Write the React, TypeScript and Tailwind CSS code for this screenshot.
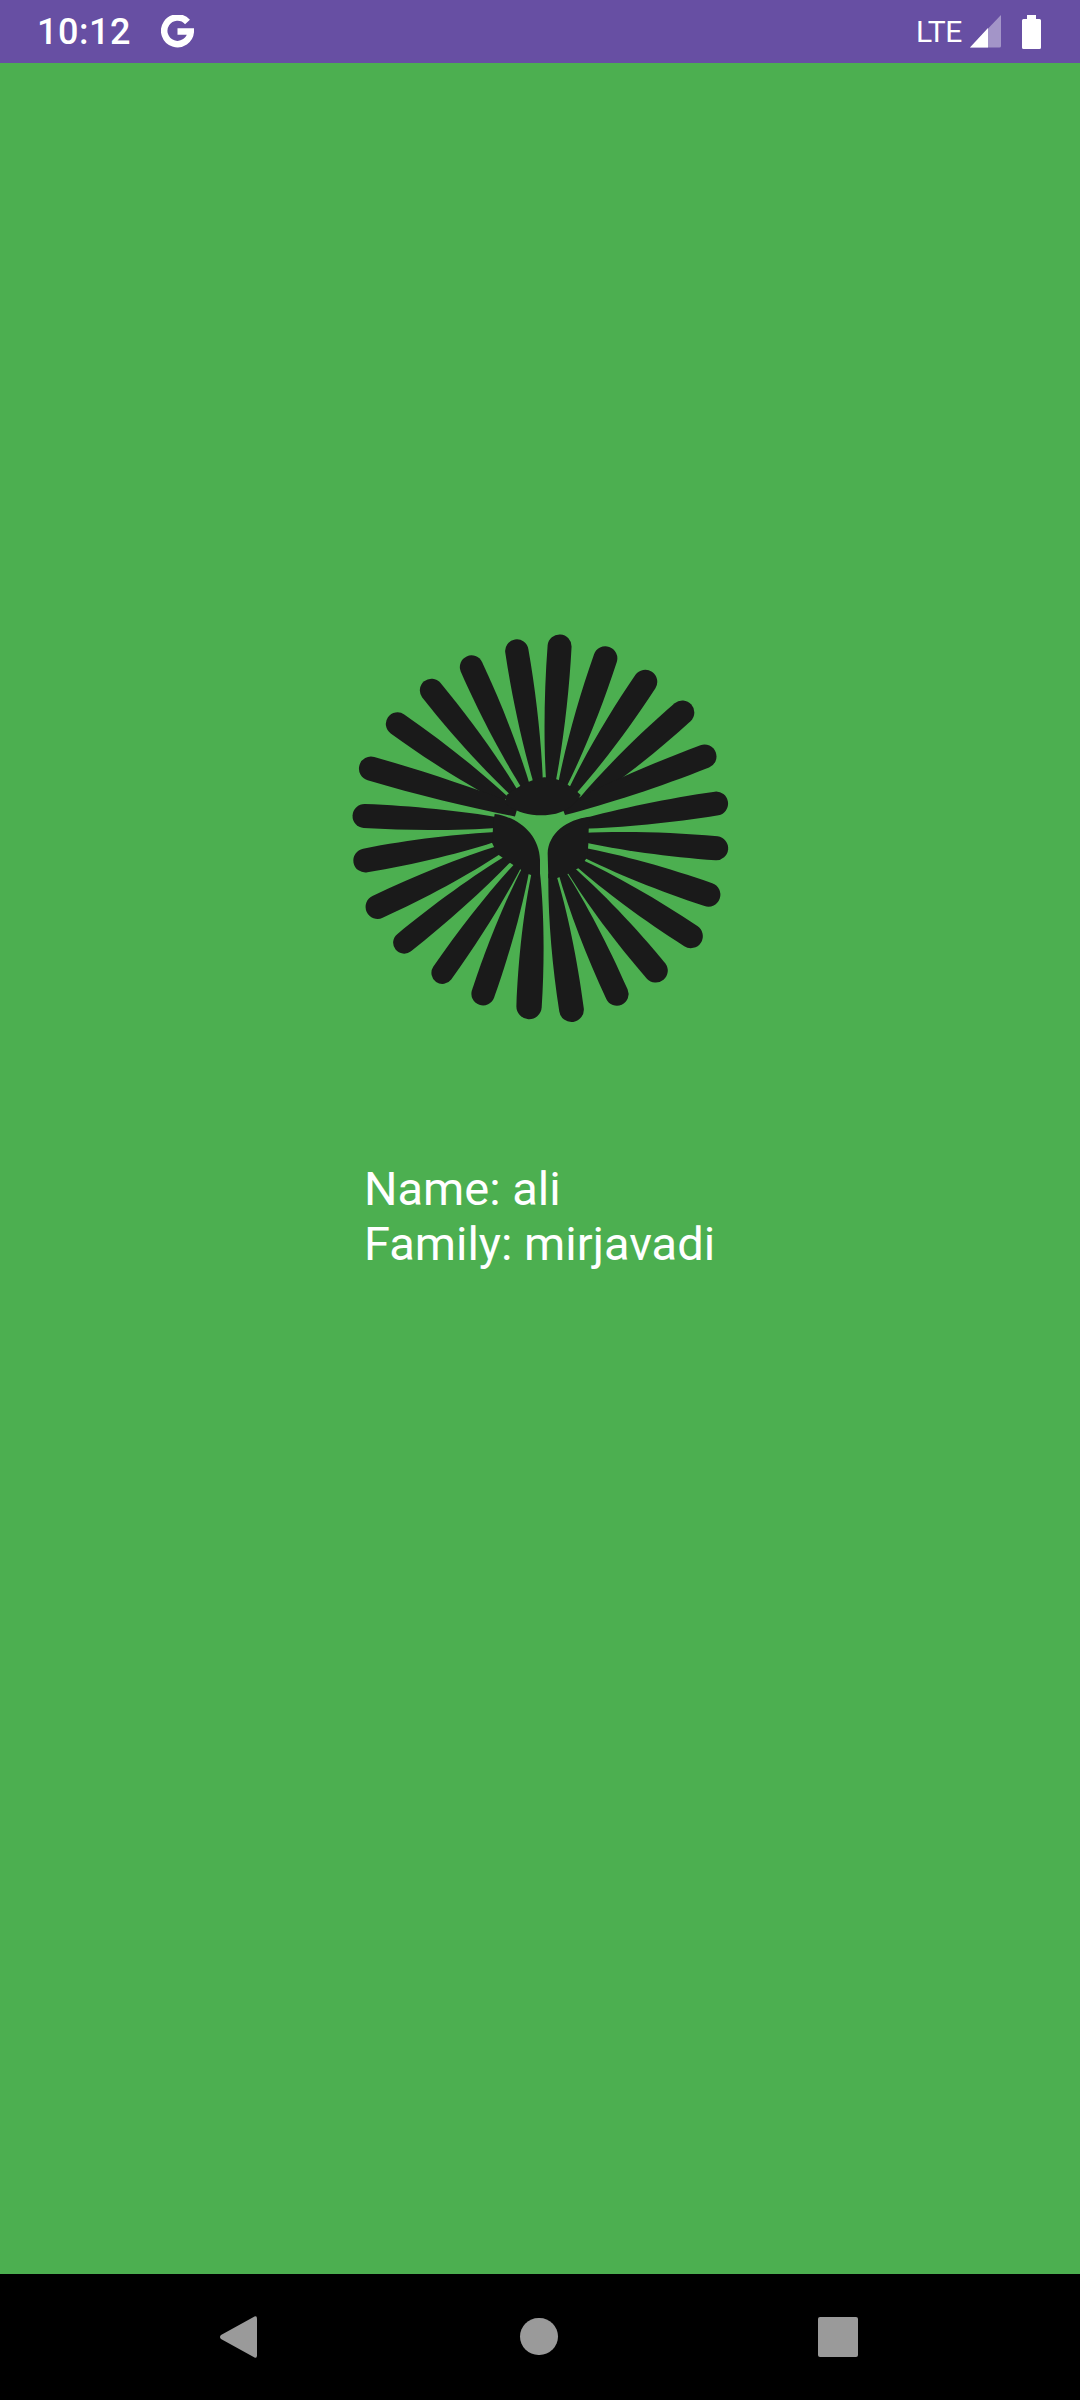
type P = [number, number, number, number, number, number?];

const petals: P[] = [
  // top group: tipX, tipY, tipR, baseX, baseY, baseHalfWidth
  [530, 90, 32, 596, 495, 13],
  [659, 75, 33, 632, 495, 13],
  [797, 112, 33, 664, 505, 12],
  [918, 182, 33, 693, 520, 12],
  [1030, 275, 33, 725, 545, 12],
  [1097, 408, 33, 670, 572, 14],
  [393, 138, 32, 560, 505, 12],
  [272, 208, 32, 526, 522, 12],
  [170, 310, 32, 495, 540, 13],
  [90, 445, 33, 530, 572, 18],
  // right group
  [1133, 550, 33, 725, 612, 15],
  [1133, 685, 33, 725, 652, 13],
  [1108, 825, 33, 725, 695, 13],
  [1055, 950, 33, 710, 725, 12],
  [950, 1055, 33, 688, 745, 11],
  [832, 1125, 32, 665, 755, 11],
  [695, 1172, 34, 636, 760, 11],
  // left group
  [70, 588, 33, 480, 608, 15],
  [73, 722, 33, 480, 648, 12],
  [110, 862, 33, 480, 688, 12],
  [190, 970, 30, 510, 712, 11],
  [305, 1062, 30, 535, 735, 11],
  [428, 1125, 32, 558, 745, 11],
  [567, 1163, 35, 588, 750, 11],
];

function petalPath([tx, ty, r0, bx, by, bw = 12]: P) {
  const r = r0 + 3;
  const dx = tx - bx;
  const dy = ty - by;
  const len = Math.hypot(dx, dy);
  const ux = dx / len;
  const uy = dy / len;
  const nx = -uy;
  const ny = ux;
  const at = (along: number, off: number) =>
    `${(bx + ux * along + nx * off).toFixed(1)} ${(by + uy * along + ny * off).toFixed(1)}`;
  const end = len - 3;
  return [
    `M${at(0, bw)}`,
    `C${at(len * 0.28, r * 0.8)} ${at(len * 0.65, r * 1.05)} ${at(end, r)}`,
    `A${r} ${r} 0 0 0 ${at(end, -r)}`,
    `C${at(len * 0.65, -r * 1.05)} ${at(len * 0.28, -r * 0.8)} ${at(0, -bw)}`,
    "Z",
  ].join(" ");
}

function Logo() {
  return (
    <svg viewBox="0 0 1200 1230" width={400} height={410} className="block" fill="#1a1a1a">
      {petals.map((p, i) => (
        <path key={i} d={petalPath(p)} />
      ))}
      {/* top blob */}
      <path d="M500 525 C540 495 575 478 612 472 C650 472 685 490 722 525 C700 560 670 585 605 586 C560 586 530 575 495 550 Z" />
      {/* left lobe */}
      <path d="M464 582 C530 590 598 640 600 720 L600 775 L565 762 L535 745 L505 725 L472 702 L456 668 L458 640 L460 606 Z" />
      {/* right lobe */}
      <path d="M748 590 C680 598 625 640 623 700 L625 775 L650 775 L688 760 L720 742 L742 712 L745 672 L746 630 Z" />
    </svg>
  );
}

export default function App() {
  return (
    <div className="flex h-[2400px] w-[1080px] flex-col bg-[#4caf50] font-['Roboto',sans-serif]">
      <header className="flex h-[63px] items-center bg-[#674fa3] pl-[37px] pr-[39px] text-white">
        <span className="text-[36px] font-medium leading-none tracking-[0.5px]">10:12</span>
        <svg viewBox="0 0 33 33" width={33} height={33} className="ml-[30px]" fill="none" stroke="#fff" strokeWidth="6.500">
          <path d="M26.500 7 A13.300 13.300 0 1 0 29.800 16.500 H16.500" />
        </svg>
        <span className="ml-auto text-[30px] leading-none tracking-[-0.4px]">LTE</span>
        <svg viewBox="0 0 32 33" width={32} height={33} className="ml-[8px]">
          <path d="M31 0 L31 31 Q31 32.500 29.500 32.500 L0 32.500 Z" fill="#fff" fillOpacity="0.4" />
          <path d="M18 13 L18 32.500 L0 32.500 Z" fill="#fff" />
        </svg>
        <svg viewBox="0 0 19 34" width={19} height={34} className="ml-[20px]">
          <path d="M5 0 H14 V4 H17.500 Q19 4 19 5.500 V32.500 Q19 34 17.500 34 H1.500 Q0 34 0 32.500 V5.500 Q0 4 1.500 4 H5 Z" fill="#fff" />
        </svg>
      </header>

      <main className="flex-1 pl-[340px] pt-[557px]">
        <Logo />
        <div className="mt-[131px] pl-[24px] text-[47px] leading-[55px] text-white">
          <p>Name: ali</p>
          <p>Family: mirjavadi</p>
        </div>
      </main>

      <nav className="flex h-[126px] items-start justify-between bg-black pl-[220px] pr-[222px] pt-[42px]">
        <svg viewBox="0 0 37 42" width={37} height={42} fill="#9a9a9a">
          <path d="M34.500 0.500 Q37 -0.500 37 2.500 V39.500 Q37 42.500 34.500 41.500 L1 23 Q-1 21 1 19 Z" />
        </svg>
        <div className="mt-[2px] ml-[2px] h-[37px] w-[38px] rounded-full bg-[#9a9a9a]" />
        <div className="mt-[1px] h-[40px] w-[40px] rounded-[2px] bg-[#9a9a9a]" />
      </nav>
    </div>
  );
}
